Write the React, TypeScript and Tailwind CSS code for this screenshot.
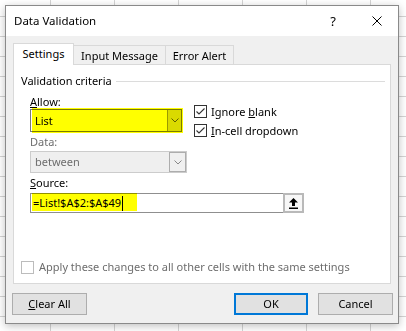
import React from "react";

function Chevron({ color = "#606060" }: { color?: string }) {
  return (
    <svg width="8" height="5" viewBox="0 0 8 5">
      <path d="M0.5 0.5L4 4L7.5 0.5" fill="none" stroke={color} />
    </svg>
  );
}

function Check({ checked, disabled }: { checked?: boolean; disabled?: boolean }) {
  return (
    <div className={`flex h-[13px] w-[13px] shrink-0 items-center justify-center border bg-white ${disabled ? "border-[#bcbcbc]" : "border-[#333333]"}`}>
      {checked && (
        <svg width="11" height="11" viewBox="0 0 11 11">
          <path d="M1.5 5.5L4 8L9.5 2.5" fill="none" stroke="#333333" strokeWidth="1.1" />
        </svg>
      )}
    </div>
  );
}

function Btn({ children, primary, w }: { children: React.ReactNode; primary?: boolean; w: string }) {
  return (
    <div className={`flex h-[22px] items-center justify-center bg-[#e1e1e1] ${w} ${primary ? "border-2 border-[#0078d7]" : "border border-[#adadad]"}`}>
      {children}
    </div>
  );
}

export default function App() {
  return (
    <div className="h-[331px] w-[406px] overflow-hidden bg-white bg-[linear-gradient(to_right,#d4d4d4_1px,transparent_1px),linear-gradient(to_bottom,#d4d4d4_1px,transparent_1px)] bg-size-[64px_20px] bg-position-[50px_16px] pl-[5px] pt-[5px] font-['Noto_Sans',sans-serif] text-[11px] leading-[14px] text-black">
      <div className="flex h-[319px] w-[394px] flex-col border border-[#8a8a8a] bg-[#f0f0f0] shadow-[0_2px_8px_rgba(0,0,0,0.25)]">
        {/* title bar */}
        <div className="flex h-[30px] items-center bg-white pl-[8px]">
          <span className="text-[11.5px]">Data Validation</span>
          <span className="ml-auto text-[13px]">?</span>
          <svg className="ml-[36px] mr-[16px]" width="10" height="10" viewBox="0 0 10 10">
            <path d="M0.5 0.5L9.5 9.5M9.5 0.5L0.5 9.5" stroke="#000" strokeWidth="1" />
          </svg>
        </div>

        {/* tabs */}
        <div className="ml-[7px] mt-[7px] flex h-[22px] items-end">
          <div className="relative z-10 flex h-[22px] w-[61px] items-center justify-center border-x border-t border-[#d9d9d9] bg-white pb-[1px]">Settings</div>
          <div className="flex h-[20px] w-[92px] items-center justify-center border-r border-t border-[#d9d9d9]">Input Message</div>
          <div className="flex h-[20px] w-[68px] items-center justify-center border-r border-t border-[#d9d9d9]">Error Alert</div>
        </div>

        {/* panel */}
        <div className="-mt-px ml-[7px] h-[220px] w-[378px] border border-[#d9d9d9] bg-white">
          <div className="mt-[8px] flex h-[16px] items-center pl-[7px] pr-[5px]">
            <span>Validation criteria</span>
            <div className="ml-[4px] h-px flex-1 bg-[#dcdcdc]" />
          </div>

          <div className="pl-[16px]">
            <div className="flex">
              <div className="w-[157px]">
                <div className="mt-[6px] h-[13px] leading-[13px]"><u>A</u>llow:</div>
                <div className="relative mt-px h-[23px] w-[152px]">
                  <div className="flex h-full items-center border border-[#7a7a7a] bg-white">
                    <span className="flex-1 pl-[4px]">List</span>
                    <div className="flex h-full w-[14px] items-center justify-center border-l border-[#9a9a9a] bg-[#dadada]">
                      <Chevron />
                    </div>
                  </div>
                  <div className="pointer-events-none absolute left-[2px] top-[-1px] h-[25px] w-[151px] bg-[#ffff00] mix-blend-multiply" />
                </div>
                <div className="mt-[3px] h-[14px] text-[#6d6d6d]">Data:</div>
                <div className="mt-[2px] flex h-[22px] w-[157px] items-center border border-[#cccccc] bg-[#efefef]">
                  <span className="flex-1 pl-[4px] text-[#6d6d6d]">between</span>
                  <div className="flex h-full w-[17px] items-center justify-center border border-[#adadad] bg-[#f0f0f0]">
                    <Chevron color="#888" />
                  </div>
                </div>
              </div>
              <div className="ml-[7px] pt-[16px]">
                <div className="flex h-[13px] items-center gap-[4px]">
                  <Check checked />
                  <span>Ignore <u>b</u>lank</span>
                </div>
                <div className="mt-[6px] flex h-[13px] items-center gap-[4px]">
                  <Check checked />
                  <span><u>I</u>n-cell dropdown</span>
                </div>
              </div>
            </div>

            <div className="mt-[3px] h-[14px]"><u>S</u>ource:</div>
            <div className="relative mt-[3px] h-[20px] w-[274px]">
              <div className="flex h-full items-center border border-[#8f8f8f] bg-white">
                <span className="pl-[2px]">=List!$A$2:$A$49</span>
                <span className="ml-[1px] h-[15px] w-px bg-black" />
                <div className="ml-auto flex h-[20px] w-[21px] -mr-px items-center justify-center border-2 border-[#b9b9b9] bg-[#f7f7f7]">
                  <svg width="9" height="11" viewBox="0 0 9 11">
                    <polygon points="4.5,0 9,4.5 6,4.5 6,8 3,8 3,4.5 0,4.5" fill="#000" />
                    <rect x="0" y="9.5" width="9" height="1.5" fill="#000" />
                  </svg>
                </div>
              </div>
              <div className="pointer-events-none absolute left-[2px] top-0 h-[18px] w-[105px] bg-[#ffff00] mix-blend-multiply" />
            </div>
          </div>

          <div className="mt-[47px] flex h-[14px] items-center gap-[5px] pl-[7px]">
            <Check disabled />
            <span className="text-[#6d6d6d]">Apply these changes to all other cells with the same settings</span>
          </div>
        </div>

        {/* buttons */}
        <div className="mt-[9px] flex pl-[6px] pr-[5px]">
          <Btn w="w-[75px]"><span><u>C</u>lear All</span></Btn>
          <div className="ml-auto" />
          <Btn w="w-[74px]" primary>OK</Btn>
          <div className="ml-[10px]" />
          <Btn w="w-[75px]">Cancel</Btn>
        </div>
      </div>
    </div>
  );
}
